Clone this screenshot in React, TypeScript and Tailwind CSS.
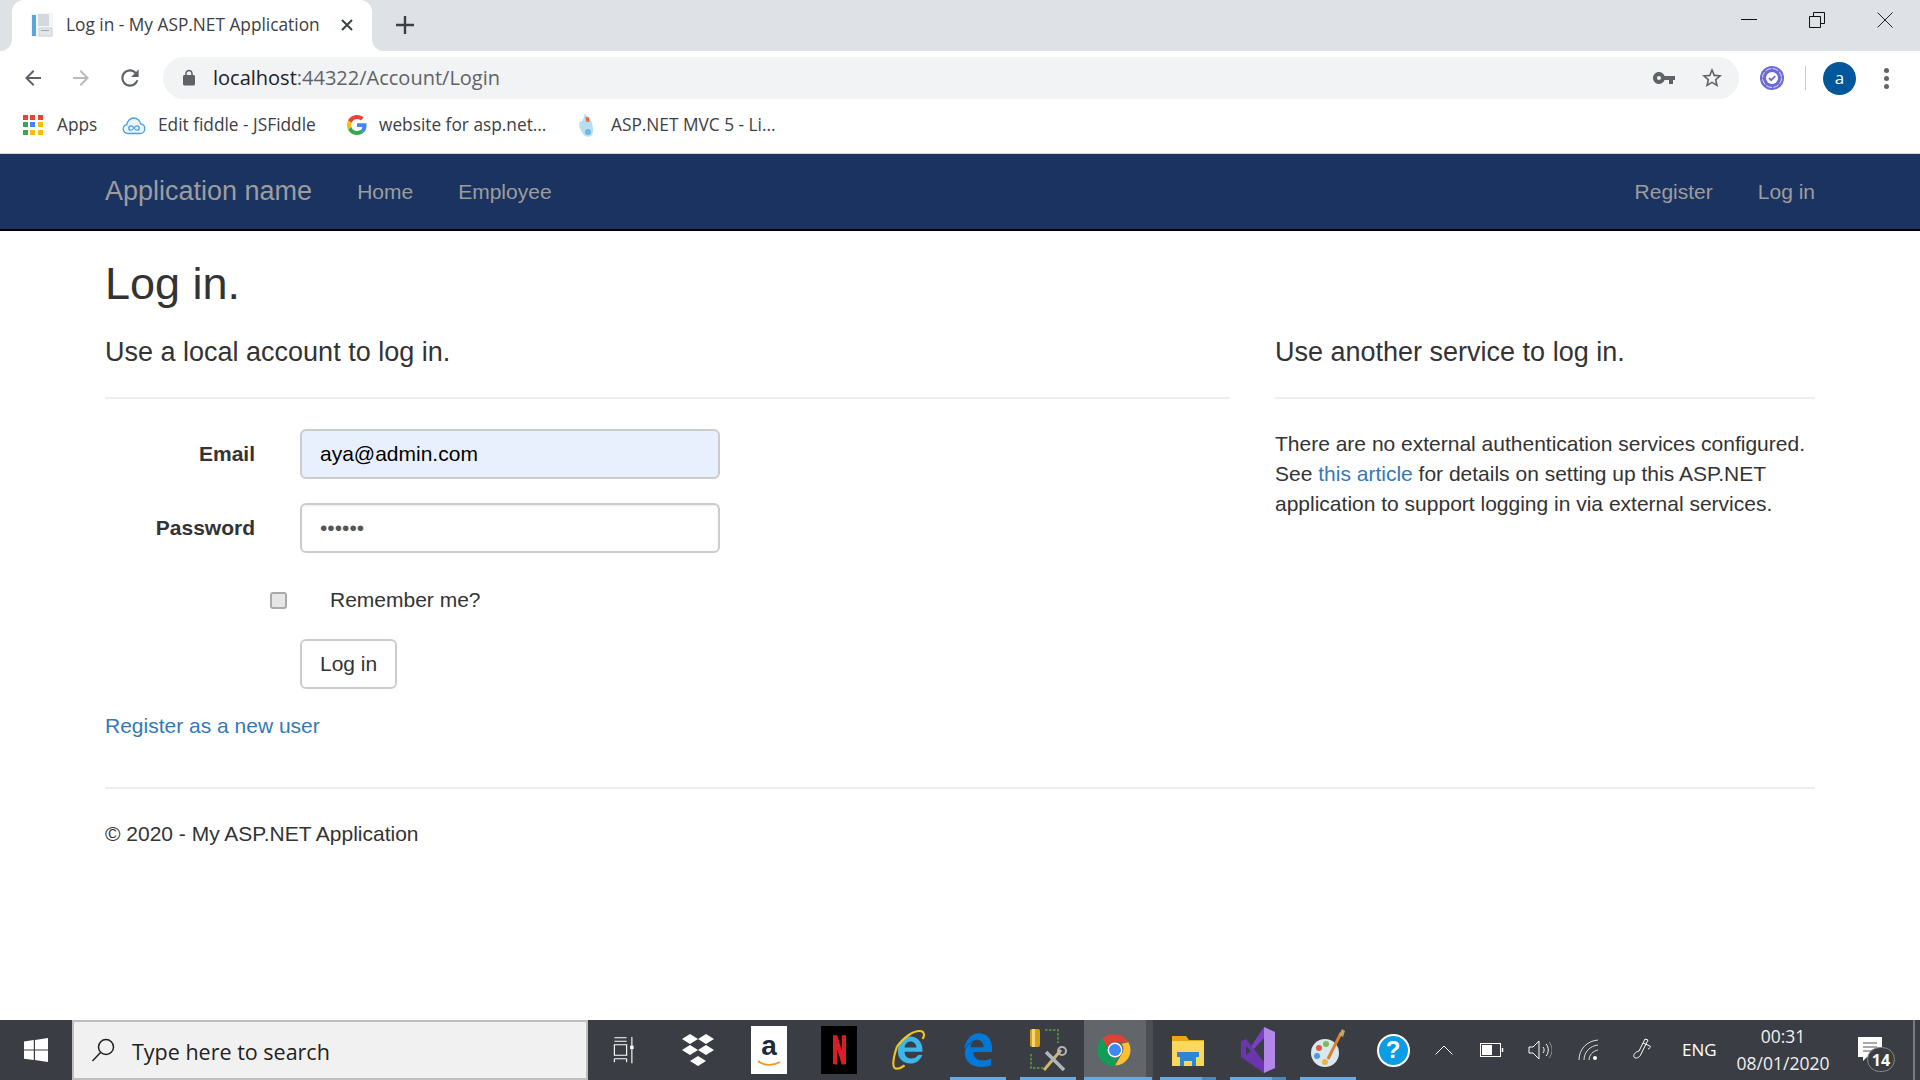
const uiFont = "[font-family:'Open_Sans','Noto_Sans',sans-serif]";

function MatIcon({ d, className, fill = "#5f6368" }: { d: string; className: string; fill?: string }) {
  return (
    <svg viewBox="0 0 24 24" className={className} fill={fill}>
      <path d={d} />
    </svg>
  );
}

function TabFavicon() {
  return (
    <svg viewBox="0 0 24 26" className="w-[24px] h-[26px] shrink-0">
      <rect x="1" y="1" width="22" height="24" fill="#f4f5f7" />
      <rect x="2" y="3" width="4" height="21" fill="#5aa5dc" />
      <rect x="8" y="2" width="11" height="12" fill="#d5d9de" />
      <rect x="9" y="16" width="13" height="8" fill="#e3e7ea" stroke="#b9c0c7" strokeWidth="0.6" />
      <rect x="11" y="18" width="8" height="1" fill="#9aa5af" />
    </svg>
  );
}

function AppsIcon() {
  const colors = ["#ea4335", "#ea4335", "#ea4335", "#34a853", "#4285f4", "#fbbc05", "#34a853", "#fbbc05", "#fbbc05"];
  return (
    <div className="grid grid-cols-3 gap-[2px] w-[20px] h-[20px]">
      {colors.map((c, i) => (
        <svg key={i} viewBox="0 0 5 5" className="w-[5px] h-[5px]">
          <rect width="5" height="5" fill={c} />
        </svg>
      ))}
    </div>
  );
}

function CloudIcon() {
  return (
    <svg viewBox="0 0 24 20" className="w-[24px] h-[20px]" fill="#eaf5fd" stroke="#4a9fe0" strokeWidth="1.3">
      <path d="M6 18.500c-2.800 0-4.800-2-4.800-4.500 0-2.200 1.500-4 3.600-4.400C5.300 6 8.200 3 11.800 3c3.400 0 6.300 2.600 6.800 5.900 2.500.3 4.200 2.400 4.200 4.800 0 2.700-2.100 4.800-4.800 4.800H6z" />
      <path d="M12 13c-1-1.500-2-2.200-3-2.200a2.200 2.200 0 0 0 0 4.400c1 0 2-.7 3-2.200zm0 0c1 1.500 2 2.200 3 2.200a2.200 2.200 0 0 0 0-4.400c-1 0-2 .7-3 2.200z" fill="none" />
    </svg>
  );
}

function GoogleIcon() {
  return (
    <svg viewBox="0 0 48 48" className="w-[20px] h-[20px]">
      <path fill="#EA4335" d="M24 9.500c3.540 0 6.710 1.220 9.210 3.600l6.850-6.850C35.900 2.380 30.470 0 24 0 14.620 0 6.510 5.380 2.560 13.220l7.980 6.190C12.430 13.720 17.740 9.500 24 9.500z" />
      <path fill="#4285F4" d="M46.980 24.550c0-1.570-.15-3.090-.38-4.550H24v9.020h12.940c-.58 2.960-2.260 5.480-4.780 7.180l7.730 6c4.510-4.180 7.090-10.360 7.090-17.650z" />
      <path fill="#FBBC05" d="M10.530 28.590c-.48-1.450-.76-2.990-.76-4.590s.27-3.140.76-4.590l-7.980-6.190C.92 16.460 0 20.120 0 24c0 3.880.92 7.540 2.560 10.780l7.970-6.190z" />
      <path fill="#34A853" d="M24 48c6.480 0 11.930-2.130 15.890-5.810l-7.730-6c-2.150 1.450-4.920 2.300-8.160 2.300-6.260 0-11.570-4.220-13.470-9.910l-7.980 6.190C6.510 42.620 14.620 48 24 48z" />
    </svg>
  );
}

function AspIcon() {
  return (
    <svg viewBox="0 0 20 26" className="w-[20px] h-[26px]">
      <path d="M8 1c1 3 6 5 7 10s2 8 0 12c-3 3-7 2-9-1C3 17 1 13 3 9c2 2 4-3 5-8z" fill="#b9def2" />
      <path d="M9 5l1 5 1-5 1 5" stroke="#e8623a" strokeWidth="1.200" fill="none" />
      <circle cx="11" cy="20" r="3" fill="#6fb9e4" />
    </svg>
  );
}

function ExtensionIcon() {
  return (
    <svg viewBox="0 0 24 24" className="w-[24px] h-[24px]">
      <circle cx="12" cy="12" r="12" fill="#6b69d6" />
      <circle cx="12" cy="12" r="9.500" fill="none" stroke="#fff" strokeWidth="0.8" strokeDasharray="6 1.500" />
      <circle cx="12" cy="12" r="6" fill="#fff" />
      <path d="M9 12l2.200 2.200L15.200 10" fill="none" stroke="#6b69d6" strokeWidth="1.800" />
    </svg>
  );
}

function WindowControls() {
  return (
    <div className="ml-auto flex items-center h-[40px]">
      <div className="w-[68px] flex justify-center">
        <svg viewBox="0 0 16 16" className="w-[16px] h-[16px]"><path d="M0 7.500h16" stroke="#111" strokeWidth="1" /></svg>
      </div>
      <div className="w-[68px] flex justify-center">
        <svg viewBox="0 0 16 16" className="w-[16px] h-[16px]" fill="none" stroke="#111" strokeWidth="1">
          <path d="M.5 4.500h11v11H.5zM4.500 4.500V.5h11v11h-4" />
        </svg>
      </div>
      <div className="w-[68px] mr-[1px] flex justify-center">
        <svg viewBox="0 0 16 16" className="w-[16px] h-[16px]" fill="none" stroke="#222" strokeWidth="1"><path d="M.5.5l15 15M15.500.5l-15 15" /></svg>
      </div>
    </div>
  );
}

function BrowserChrome() {
  return (
    <div className={`${uiFont} bg-white`}>
      <div className="h-[51px] bg-[#dee1e6] flex items-end">
        <div className="w-[12px] h-[12px] bg-white"><div className="w-full h-full bg-[#dee1e6] rounded-br-[12px]" /></div>
        <div className="w-[360px] h-[51px] bg-white rounded-t-[12px] flex items-center pl-[18px] pb-[2px]">
          <TabFavicon />
          <span className="ml-[12px] text-[17.3px] text-[#3c4043] whitespace-nowrap">Log in - My ASP.NET Application</span>
          <svg viewBox="0 0 12 12" className="w-[12px] h-[12px] ml-auto mr-[19px]" stroke="#3c4043" strokeWidth="2"><path d="M1 1l10 10M11 1L1 11" /></svg>
        </div>
        <div className="w-[12px] h-[12px] bg-white"><div className="w-full h-full bg-[#dee1e6] rounded-bl-[12px]" /></div>
        <div className="h-[49px] self-start flex items-center ml-[12px]">
          <svg viewBox="0 0 18 18" className="w-[18px] h-[18px]" stroke="#3c4043" strokeWidth="2.400"><path d="M9 0v18M0 9h18" /></svg>
        </div>
        <div className="ml-auto self-start h-[40px]"><WindowControls /></div>
      </div>

      <div className="h-[51px] pt-[3px] flex items-center">
        <div className="w-[163px] flex items-center pl-[21px] gap-[24px]">
          <MatIcon className="w-[24px] h-[24px]" d="M20 11H7.830l5.590-5.590L12 4l-8 8 8 8 1.410-1.410L7.830 13H20v-2z" />
          <MatIcon className="w-[24px] h-[24px]" fill="#b8babd" d="M12 4l-1.410 1.410L16.170 11H4v2h12.170l-5.580 5.590L12 20l8-8z" />
          <MatIcon className="w-[26px] h-[26px]" d="M17.650 6.350C16.200 4.900 14.210 4 12 4c-4.420 0-7.990 3.580-7.990 8s3.570 8 7.990 8c3.730 0 6.840-2.550 7.730-6h-2.080c-.82 2.330-3.040 4-5.650 4-3.310 0-6-2.690-6-6s2.690-6 6-6c1.660 0 3.140.69 4.220 1.780L13 11h7V4l-2.350 2.350z" />
        </div>
        <div className="w-[1576px] h-[42px] bg-[#f1f3f4] rounded-full flex items-center pl-[17px] pr-[15px]">
          <MatIcon className="w-[18px] h-[18px]" d="M18 8h-1V6c0-2.760-2.240-5-5-5S7 3.240 7 6v2H6c-1.100 0-2 .9-2 2v10c0 1.100.9 2 2 2h12c1.100 0 2-.9 2-2V10c0-1.100-.9-2-2-2zM9 6c0-1.660 1.340-3 3-3s3 1.340 3 3v2H9V6z" />
          <span className="ml-[15px] text-[20px] text-[#5f6368] whitespace-nowrap">
            <span className="text-[#202124]">localhost</span>:44322/Account/Login
          </span>
          <MatIcon className="ml-auto w-[24px] h-[24px]" d="M12.650 10C11.830 7.670 9.610 6 7 6c-3.310 0-6 2.690-6 6s2.690 6 6 6c2.610 0 4.830-1.670 5.650-4H17v4h4v-4h2v-4H12.650zM7 14c-1.100 0-2-.9-2-2s.9-2 2-2 2 .9 2 2-.9 2-2 2z" />
          <MatIcon className="ml-[24px] w-[24px] h-[24px]" d="M22 9.240l-7.190-.62L12 2 9.190 8.630 2 9.240l5.460 4.730L5.820 21 12 17.270 18.180 21l-1.630-7.030L22 9.240zM12 15.400l-3.760 2.270 1-4.280-3.320-2.880 4.380-.38L12 6.100l1.710 4.040 4.380.38-3.320 2.880 1 4.280L12 15.400z" />
        </div>
        <div className="ml-[21px]"><ExtensionIcon /></div>
        <div className="ml-[21px] w-[1px] h-[24px] bg-[#c8cacc]" />
        <div className="ml-[17px] w-[33px] h-[33px] rounded-full bg-[#01579b] text-white text-[17px] flex items-center justify-center">a</div>
        <div className="ml-[28px] flex flex-col gap-[3px]">
          <div className="w-[5px] h-[5px] rounded-full bg-[#5f6368]" />
          <div className="w-[5px] h-[5px] rounded-full bg-[#5f6368]" />
          <div className="w-[5px] h-[5px] rounded-full bg-[#5f6368]" />
        </div>
      </div>

      <div className="h-[52px] pb-[5px] flex items-center text-[17.3px] text-[#3c4043] whitespace-nowrap border-b border-[#d8d8d8] pl-[23px]">
        <AppsIcon />
        <span className="ml-[14px] w-[65px]">Apps</span>
        <CloudIcon />
        <span className="ml-[12px] w-[189px]">Edit fiddle - JSFiddle</span>
        <GoogleIcon />
        <span className="ml-[12px] w-[198px]">website for asp.net...</span>
        <AspIcon />
        <span className="ml-[14px]">ASP.NET MVC 5 - Li...</span>
      </div>
    </div>
  );
}

function Navbar() {
  return (
    <nav className="h-[77px] bg-[#1b3360] border-b-2 border-black flex items-center px-[105px] text-[#9d9d9d] text-[21px] gap-[45px]">
      <span className="text-[27px]">Application name</span>
      <span>Home</span>
      <span>Employee</span>
      <span className="ml-auto">Register</span>
      <span>Log in</span>
    </nav>
  );
}

function LoginPage() {
  return (
    <main className="flex-1 px-[105px] text-[21px] leading-[30px] text-[#333]">
      <h2 className="text-[45px] leading-[50px] mt-[28px]">Log in.</h2>
      <div className="flex gap-[45px] mt-[28px]">
        <section className="w-[1125px]">
          <h4 className="text-[27px] leading-[30px]">Use a local account to log in.</h4>
          <hr className="mt-[30px] border-t-2 border-[#eee]" />
          <div className="flex items-center gap-[45px] mt-[30px]">
            <label className="w-[150px] text-right font-bold">Email</label>
            <input readOnly value="aya@admin.com" className="w-[420px] h-[50px] px-[18px] bg-[#e8f0fe] text-black border-2 border-[#ccc] rounded-[6px] outline-none" />
          </div>
          <div className="flex items-center gap-[45px] mt-[24px]">
            <label className="w-[150px] text-right font-bold">Password</label>
            <input readOnly type="password" value="secret" className="w-[420px] h-[50px] px-[18px] bg-white text-[#555] text-[21px] border-2 border-[#ccc] rounded-[6px] outline-none shadow-[inset_0_1px_2px_rgba(0,0,0,0.08)]" />
          </div>
          <div className="flex items-center mt-[32px] pl-[165px]">
            <input readOnly type="checkbox" className="appearance-none w-[17px] h-[17px] bg-[#e6e6e6] border-2 border-[#aaa] rounded-[3px]" />
            <span className="ml-[43px]">Remember me?</span>
          </div>
          <div className="mt-[24px] pl-[195px]">
            <button className="h-[50px] px-[18px] bg-white border-2 border-[#ccc] rounded-[6px]">Log in</button>
          </div>
          <a className="block mt-[22px] text-[#337ab7]">Register as a new user</a>
        </section>
        <section className="w-[540px]">
          <h4 className="text-[27px] leading-[30px]">Use another service to log in.</h4>
          <hr className="mt-[30px] border-t-2 border-[#eee]" />
          <p className="mt-[30px]">
            There are no external authentication services configured. See <a className="text-[#337ab7]">this article</a> for details on setting up this ASP.NET application to support logging in via external services.
          </p>
        </section>
      </div>
      <hr className="mt-[46px] border-t-2 border-[#eee]" />
      <p className="mt-[30px]">© 2020 - My ASP.NET Application</p>
    </main>
  );
}

function Slot({ bar, split, children }: { bar?: boolean; split?: boolean; children: React.ReactNode }) {
  return (
    <div className="relative w-[70px] h-[60px] flex items-center justify-center shrink-0">
      {children}
      {bar && (
        <div className={`absolute bottom-0 left-[7px] w-[56px] h-[3px] ${split ? "bg-[#4f86b8]" : "bg-[#6aa9e0]"}`}>
          {split && <div className="w-[42px] h-[3px] bg-[#6aa9e0]" />}
        </div>
      )}
    </div>
  );
}

// active task button: lighter tile, then the darker stacked-window edge
function ActiveSlot({ children }: { children: React.ReactNode }) {
  return (
    <div className="relative w-[70px] h-[60px] flex shrink-0">
      <div className="w-[62px] ml-[1px] bg-[#62666a] flex items-center justify-center">{children}</div>
      <div className="w-[7px] bg-[#4b4e52]" />
      <div className="absolute bottom-0 left-[1px] w-[68px] h-[3px] bg-[#6aa9e0]" />
    </div>
  );
}

function ChromeLogo() {
  return (
    <svg viewBox="0 0 48 48" className="w-[34px] h-[34px]">
      <path d="M24 2a22 22 0 0 1 19 11H24a11 11 0 0 0-10.500 7.500L6 8a22 22 0 0 1 18-6z" fill="#db4437" />
      <path d="M43 13a22 22 0 0 1-19 33l9.500-16.500A11 11 0 0 0 33 15z" fill="#fbc02d" />
      <path d="M24 46A22 22 0 0 1 6 8l8 14a11 11 0 0 0 13 12z" fill="#0f9d58" />
      <circle cx="24" cy="24" r="10.500" fill="#fff" />
      <circle cx="24" cy="24" r="8.500" fill="#4285f4" />
    </svg>
  );
}

function Taskbar() {
  return (
    <footer className="h-[60px] bg-[#3a3d43] flex items-center text-white">
      <div className="w-[72px] flex justify-center">
        <svg viewBox="0 0 24 24" className="w-[24px] h-[24px]" fill="#fff">
          <path d="M0 3.400l9.800-1.300v9.400H0zM11 1.900L24 0v11.500H11zM0 12.600h9.800V22L0 20.700zM11 12.600h13V24l-13-1.900z" />
        </svg>
      </div>
      <div className={`${uiFont} w-[516px] h-[60px] bg-[#f1f1f1] border-2 border-[#bfbfbf] flex items-center pl-[17px] text-[21.500px] text-[#222]`}>
        <svg viewBox="0 0 24 24" className="w-[24px] h-[24px]" fill="none" stroke="#222" strokeWidth="1.500">
          <circle cx="15" cy="9" r="7.500" /><path d="M9.500 14.500L1.500 23" />
        </svg>
        <span className="ml-[17px] mt-[4px]">Type here to search</span>
      </div>
      <div className="w-[75px] flex justify-center pr-[4px]">
        <svg viewBox="0 0 24 32" className="w-[24px] h-[28px]" fill="none" stroke="#fff" strokeWidth="1.300">
          <path d="M1 2h14M1 6h14M1 10h14v12H1zM1 26h14M1 30v-4M15 30v-4M21 1v10M21 15v16" /><rect x="19" y="11" width="4" height="4" fill="#fff" stroke="none" />
        </svg>
      </div>
      <Slot>
        <svg viewBox="0 0 36 36" className="w-[36px] h-[36px]" fill="#fff">
          <path d="M10 2l8 5-8 5-8-5zM26 2l8 5-8 5-8-5zM10 13l8 5-8 5-8-5zM26 13l8 5-8 5-8-5zM18 24l8 5-8 5-8-5z" />
        </svg>
      </Slot>
      <Slot>
        <div className="w-[36px] h-[48px] ml-[2px] bg-white flex flex-col items-center justify-center">
          <span className="text-[28px] leading-[28px] font-bold text-[#1d2a3a] [font-family:'Liberation_Sans',sans-serif]">a</span>
          <svg viewBox="0 0 24 8" className="w-[24px] h-[8px]" fill="none" stroke="#f29a1f" strokeWidth="1.800"><path d="M1 1c6 5 15 5 22 1" /></svg>
        </div>
      </Slot>
      <Slot>
        <div className="w-[36px] h-[48px] ml-[2px] bg-black flex items-center justify-center">
          <svg viewBox="0 0 14 32" className="w-[13px] h-[32px]" fill="#d81f26">
            <path d="M0 0h4.500v32L0 31zM9.500 0H14v31l-4.500 1zM0 0h4.500L14 31l-4.500 1z" />
          </svg>
        </div>
      </Slot>
      <Slot>
        <svg viewBox="0 0 40 48" className="w-[34px] h-[42px]">
          <path d="M8 25c0-10 7-17 15-17s14 7 14 15v3H16c0 5 3 8 8 8 3 0 6-1 8-4h5c-3 7-8 10-14 10-9 0-15-6-15-15zm8-4h14c-.5-4-3-7-7-7s-6.500 3-7 7z" fill="#3fb6ea" />
          <path d="M36 2c3 1 4 5 1 9M7 20C3 32 1 41 4 45c3 2 8 0 12-3M36 2c-8-2-20 6-29 18" fill="none" stroke="#f5c518" strokeWidth="2.500" />
        </svg>
      </Slot>
      <Slot bar>
        <svg viewBox="0 0 32 38" className="w-[30px] h-[42px]">
          <path d="M1 18C3 7 10 1 17 1c9 0 14 7 14 16v4H11c0 6 4 9 10 9 4 0 7-1 9-2v7c-3 2-7 2-11 2C9 37 2 31 2 23c0-6 3-10 9-13-2 2-3 4-3 6h14c0-5-3-8-7-8-5 0-10 5-14 10z" fill="#0078d7" />
        </svg>
      </Slot>
      <Slot bar>
        <svg viewBox="0 0 40 48" className="w-[40px] h-[48px]">
          <rect x="2" y="3" width="10" height="18" rx="2" fill="#d4a017" />
          <rect x="4" y="3" width="3" height="18" fill="#f4d774" />
          <path d="M17 4h13v13M3 28v14h12" fill="none" stroke="#4f8a3c" strokeWidth="2" strokeDasharray="2.500 1.500" />
          <path d="M16 44L33 24" stroke="#d8b36b" strokeWidth="3" />
          <path d="M18 26l18 18" stroke="#aeb6c0" strokeWidth="3.500" />
          <circle cx="34" cy="25" r="4" fill="none" stroke="#aeb6c0" strokeWidth="2" />
        </svg>
      </Slot>
      <ActiveSlot><ChromeLogo /></ActiveSlot>
      <Slot bar split>
        <svg viewBox="0 0 32 34" className="w-[32px] h-[34px]">
          <path d="M0 3h14l3 4h15v24H0z" fill="#e8a90f" />
          <rect y="8" width="32" height="25" fill="#fbd75b" />
          <path d="M8 33V23h16v10h-4v-5h-8v5z" fill="#2f86d0" />
          <rect x="5" y="19" width="22" height="5" fill="#2f86d0" />
        </svg>
      </Slot>
      <Slot bar split>
        <svg viewBox="0 0 36 48" className="w-[36px] h-[48px]">
          <path d="M24 1l11 5v36l-11 5L6 28l18-27z" fill="#7b3fc4" />
          <path d="M24 12v24L13 24z" fill="#3a3d43" />
          <path d="M24 1l11 5v36l-11 5z" fill="#b287e8" />
          <path d="M1 15l5-2 18 23v11L1 31z" fill="#6b35ad" />
          <path d="M6 20v9l5-4z" fill="#3a3d43" />
        </svg>
      </Slot>
      <Slot bar>
        <svg viewBox="0 0 36 46" className="w-[36px] h-[46px]">
          <ellipse cx="15" cy="26" rx="14" ry="14" fill="#dbe7ef" />
          <circle cx="9" cy="21" r="3" fill="#de5a4a" />
          <circle cx="16" cy="17" r="3" fill="#7dbb52" />
          <circle cx="7" cy="29" r="3" fill="#4f9ad8" />
          <circle cx="15" cy="35" r="3" fill="#e8b93c" />
          <path d="M18 32L31 6" stroke="#d9822b" strokeWidth="3" />
          <path d="M29 8l3-6 3 2-2 6z" fill="#c4a26a" />
        </svg>
      </Slot>
      <div className="w-[52px] flex justify-center ml-[4px]">
        <div className="w-[33px] h-[33px] rounded-full bg-[#0a9de3] border-2 border-white flex items-center justify-center text-[24px] font-bold text-white [font-family:'Liberation_Sans',sans-serif]">?</div>
      </div>
      <svg viewBox="0 0 18 10" className="w-[18px] h-[10px] ml-[16px]" fill="none" stroke="#fff" strokeWidth="1"><path d="M.5 9.500L9 1l8.500 8.500" /></svg>
      <svg viewBox="0 0 24 14" className="w-[24px] h-[14px] ml-[27px]" fill="none" stroke="#fff" strokeWidth="1">
        <rect x=".5" y=".5" width="20" height="13" /><rect x="2" y="2" width="10" height="10" fill="#fff" stroke="none" /><path d="M22.500 5v4" strokeWidth="1.500" />
      </svg>
      <svg viewBox="0 0 24 20" className="w-[24px] h-[20px] ml-[24px]" fill="none" stroke="#fff" strokeWidth="1">
        <path d="M1 7h4l6-6v18l-6-6H1zM15 7c1.500 2 1.500 4 0 6M18 4c3 3 3 9 0 12" /><path d="M21 2c4 5 4 11 0 16" stroke="#8a8d90" />
      </svg>
      <svg viewBox="0 0 22 22" className="w-[22px] h-[22px] ml-[26px]" fill="none" stroke="#ddd" strokeWidth="1">
        <path d="M1 21C1 10 9 2 20 1M6 21C6 13 12 7 20 6M11 21c0-5 4-9 9-10" /><circle cx="17" cy="19" r="2" fill="#fff" stroke="none" />
      </svg>
      <svg viewBox="0 0 22 24" className="w-[22px] h-[24px] ml-[31px]" fill="none" stroke="#fff" strokeWidth="1">
        <path d="M14 1l3 1-7 14c-1 4-6 5-7 3s1-5 5-6zM12 5l7 3c1 1 0 2-2 3" />
      </svg>
      <span className={`${uiFont} ml-[29px] w-[44px] text-[17px]`}>ENG</span>
      <div className={`${uiFont} ml-[2px] w-[110px] text-center text-[17.500px] leading-[27px] text-[#f0f0f0]`}>
        <div>00:31</div>
        <div>08/01/2020</div>
      </div>
      <div className="relative ml-[20px] mt-[10px] w-[37px] h-[36px]">
        <svg viewBox="0 0 24 24" className="w-[24px] h-[24px]" fill="#fff">
          <path d="M0 0h24v20H9l-4 4v-4H0z" /><path d="M5 6h14M5 10h14M5 14h14" stroke="#555" strokeWidth="1" />
        </svg>
        <div className={`${uiFont} absolute left-[9px] top-[10px] w-[28px] h-[25px] rounded-full bg-[#3a3d43] border border-[#888] text-[16px] font-bold flex items-center justify-center`}>14</div>
      </div>
      <div className="ml-[18px] w-[2px] h-[60px] bg-[#7a7c80]" />
    </footer>
  );
}

export default function App() {
  return (
    <div className="w-[1920px] h-[1080px] overflow-hidden flex flex-col bg-white [font-family:'Liberation_Sans',Arial,sans-serif]">
      <BrowserChrome />
      <Navbar />
      <LoginPage />
      <Taskbar />
    </div>
  );
}
